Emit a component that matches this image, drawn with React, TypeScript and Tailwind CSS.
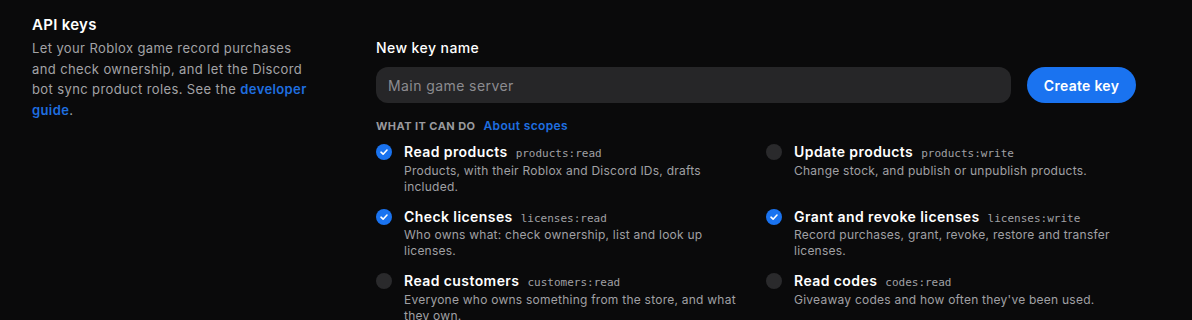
import React from "react";

type Scope = {
  title: string;
  code: string;
  desc: string;
  on: boolean;
};

const scopes: Scope[] = [
  {
    title: "Read products",
    code: "products:read",
    desc: "Products, with their Roblox and Discord IDs, drafts included.",
    on: true,
  },
  {
    title: "Update products",
    code: "products:write",
    desc: "Change stock, and publish or unpublish products.",
    on: false,
  },
  {
    title: "Check licenses",
    code: "licenses:read",
    desc: "Who owns what: check ownership, list and look up licenses.",
    on: true,
  },
  {
    title: "Grant and revoke licenses",
    code: "licenses:write",
    desc: "Record purchases, grant, revoke, restore and transfer licenses.",
    on: true,
  },
  {
    title: "Read customers",
    code: "customers:read",
    desc: "Everyone who owns something from the store, and what they own.",
    on: false,
  },
  {
    title: "Read codes",
    code: "codes:read",
    desc: "Giveaway codes and how often they've been used.",
    on: false,
  },
];

function Check({ on }: { on: boolean }) {
  if (!on) {
    return <span className="mt-[2px] h-4 w-4 shrink-0 rounded-full bg-[#2a2a2c]" />;
  }
  return (
    <span className="mt-[2px] flex h-4 w-4 shrink-0 items-center justify-center rounded-full bg-[#1a73f0]">
      <svg width="10" height="10" viewBox="0 0 10 10" fill="none">
        <path
          d="M2 5.2 L4.1 7.2 L8 3"
          stroke="white"
          strokeWidth="1.6"
          strokeLinecap="round"
          strokeLinejoin="round"
        />
      </svg>
    </span>
  );
}

export default function App() {
  return (
    <div
      className="h-[320px] w-full overflow-hidden bg-[#0a0a0b] text-white"
      style={{ fontFamily: "Inter, 'Noto Sans', sans-serif" }}
    >
      <div className="flex gap-[60px] px-8 pt-[14px]">
        {/* LEFT INTRO */}
        <div className="w-[284px] shrink-0">
          <h2 className="text-[15px] leading-[22px] font-semibold tracking-[0.02em]">API keys</h2>
          <p className="mt-[2px] text-[13px] leading-[20.5px] tracking-[0.03em] text-[#a3a3a6]">
            Let your Roblox game record purchases and check ownership, and let the Discord bot
            sync product roles. See the{" "}
            <a className="font-semibold text-[#1f6fe0]">developer guide</a>.
          </p>
        </div>

        {/* FORM */}
        <div className="w-[760px] pt-[24px]">
          <label className="block text-[14px] leading-5 font-medium tracking-[0.03em]">
            New key name
          </label>
          <div className="mt-[9px] flex gap-4">
            <div className="flex h-9 flex-1 items-center rounded-[12px] bg-[#262628] px-3 text-[14px] tracking-[0.03em] text-[#8c8c90]">
              Main game server
            </div>
            <button className="h-9 w-[109px] rounded-full bg-[#1a73f0] text-[14px] font-semibold tracking-[0.02em]">
              Create key
            </button>
          </div>

          <div className="mt-[14px] flex items-center gap-2">
            <span className="text-[11px] font-bold tracking-[0.04em] text-[#9a9a9e]">
              WHAT IT CAN DO
            </span>
            <a className="text-[12px] font-semibold tracking-[0.03em] text-[#1f6fe0]">
              About scopes
            </a>
          </div>

          <div className="mt-[7px] grid grid-cols-2 gap-x-5 gap-y-3">
            {scopes.map((s) => (
              <div key={s.code} className="flex gap-3">
                <Check on={s.on} />
                <div className="min-w-0 flex-1">
                  <div className="flex items-baseline gap-2">
                    <span className="text-[14px] leading-5 font-semibold tracking-[0.03em]">
                      {s.title}
                    </span>
                    <span
                      className="text-[11px] text-[#a0a0a4]"
                      style={{ fontFamily: "'DejaVu Sans Mono', monospace" }}
                    >
                      {s.code}
                    </span>
                  </div>
                  <p className="text-[12px] leading-4 tracking-[0.02em] text-[#a0a0a4]">
                    {s.desc}
                  </p>
                </div>
              </div>
            ))}
          </div>
        </div>
      </div>
    </div>
  );
}
